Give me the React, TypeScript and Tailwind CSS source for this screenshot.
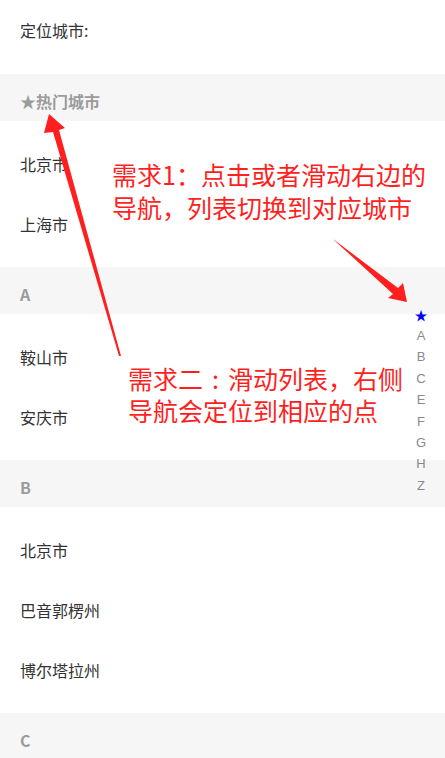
import React from "react";

type Section = { title: string; cities: string[] };

const sections: Section[] = [
  { title: "★热门城市", cities: ["北京市", "上海市"] },
  { title: "A", cities: ["鞍山市", "安庆市"] },
  { title: "B", cities: ["北京市", "巴音郭楞州", "博尔塔拉州"] },
  { title: "C", cities: ["长春市", "成都市"] },
];

const letters = ["A", "B", "C", "E", "F", "G", "H", "Z"];

export default function App() {
  return (
    <div
      className="relative h-[758px] w-[445px] overflow-hidden bg-white"
      style={{ fontFamily: '"Noto Sans CJK SC", "Liberation Sans", sans-serif' }}
    >
      {/* located city */}
      <div className="h-[74px] px-5 pt-[19px] text-[16px] leading-[22px] text-[#333]">定位城市:</div>

      {sections.map((s) => (
        <div key={s.title}>
          <div className="h-[47px] bg-[#f6f6f6] px-5 pt-[16px] text-[16px] font-bold leading-[22px] text-[#9b9b9b]">
            {s.title}
          </div>
          <ul className="py-[13px]">
            {s.cities.map((c) => (
              <li key={c} className="flex h-[60px] items-center px-5 text-[16px] text-[#333]">
                {c}
              </li>
            ))}
          </ul>
        </div>
      ))}

      {/* right index nav */}
      <div className="absolute right-[14px] top-[304px] flex w-[20px] flex-col items-center">
        <span className="flex h-[21px] items-center text-[13px] text-[#0000ff]">★</span>
        {letters.map((l) => (
          <span
            key={l}
            className="flex h-[21.4px] items-center text-[13px] text-[#8a8a8a]"
            style={{ fontFamily: '"Liberation Sans", sans-serif' }}
          >
            {l}
          </span>
        ))}
      </div>

      {/* annotations */}
      <div className="absolute left-[112px] top-[158px] text-[25px] leading-[33px] text-[#ff1f1f]">
        <div>需求1：点击或者滑动右边的</div>
        <div>导航，列表切换到对应城市</div>
      </div>
      <div className="absolute left-[128px] top-[362px] text-[25px] leading-[32px] text-[#ff1f1f]">
        <div>
          需求二<span className="inline-block w-[25px] text-center">:</span>滑动列表，右侧
        </div>
        <div>导航会定位到相应的点</div>
      </div>

      <svg className="pointer-events-none absolute inset-0" width="445" height="758" viewBox="0 0 445 758">
        <polygon points="121,356 59,130 65,128 49,114 44,133 53,132 119,356" fill="#ff1f1f" />
        <polygon points="333,239 398,288 403,283 407,302 388,298 393,294 335,241" fill="#ff1f1f" />
      </svg>
    </div>
  );
}
